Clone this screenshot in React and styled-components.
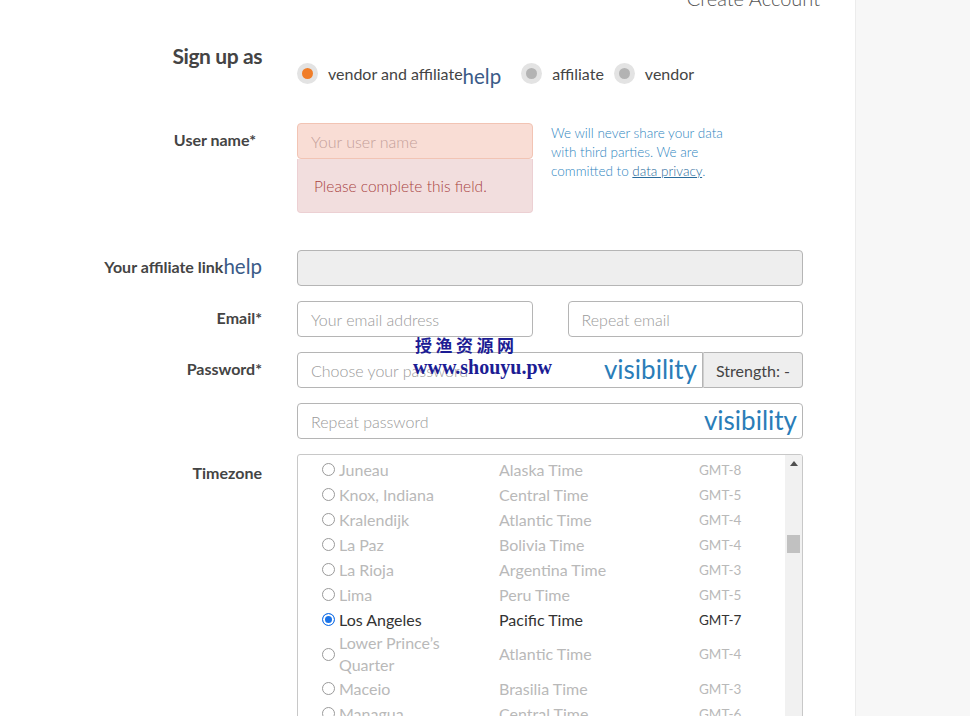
import React from "react";
import styled, { createGlobalStyle } from "styled-components";

const Global = createGlobalStyle`
  html, body { margin: 0; padding: 0; overflow: hidden; background: #fff; }
  body { font-family: Lato, "Open Sans", sans-serif; color: #444; }
  * { box-sizing: border-box; }
`;

const Page = styled.div`
  position: relative;
  display: flex;
  width: 970px;
  height: 716px;
  overflow: hidden;
`;

const Main = styled.div`
  width: 855px;
  flex: none;
  background: #fff;
`;

const Side = styled.div`
  flex: 1;
  background: #f7f7f7;
  border-left: 1px solid #ececec;
`;

const Header = styled.div`
  margin-top: -14px;
  height: 24px;
  line-height: 24px;
  font-size: 20px;
  font-weight: 300;
  color: #555;
  text-align: right;
  padding-right: 35px;
`;

const Row = styled.div`
  display: grid;
  grid-template-columns: 262px 506px;
  column-gap: 35px;
  margin-top: ${(p) => p.$mt || 0}px;
  align-items: start;
`;

const Label = styled.div`
  display: flex;
  justify-content: flex-end;
  align-items: center;
  height: ${(p) => (p.$big ? 28 : 36)}px;
  padding-bottom: ${(p) => p.$lift || 0}px;
  font-weight: 700;
  font-size: ${(p) => (p.$big ? 21 : 16)}px;
  color: #444;
  padding-right: ${(p) => p.$pr || 0}px;
  letter-spacing: ${(p) => (p.$big ? "-0.4px" : "0")};
  white-space: nowrap;
`;

const HelpIcon = styled.span`
  font-weight: 400;
  font-size: 20.5px;
  line-height: 1;
  color: #3b5b88;
  position: relative;
  top: ${(p) => p.$drop || 0}px;
`;

const RadioGroup = styled.div`
  display: flex;
  align-items: center;
  margin-top: 20px;
  height: 24px;
`;

const RoleOption = styled.label`
  display: flex;
  align-items: center;
  font-size: 16px;
  color: #444;
  margin-right: ${(p) => p.$mr || 0}px;
`;

const RoleDot = styled.span`
  width: 21px;
  height: 21px;
  border-radius: 50%;
  background: #e3e3e3;
  display: inline-flex;
  align-items: center;
  justify-content: center;
  margin-right: 10px;
  &::after {
    content: "";
    width: 11px;
    height: 11px;
    border-radius: 50%;
    background: ${(p) => (p.$on ? "#f07d28" : "#b3b3b3")};
  }
`;

const Input = styled.div`
  height: 36px;
  border: 1px solid ${(p) => (p.$error ? "#f2c4b4" : "#b5b5b5")};
  background: ${(p) => (p.$error ? "#f9ddd5" : p.$disabled ? "#eeeeee" : "#fff")};
  border-radius: ${(p) => (p.$joinRight ? "4px 0 0 4px" : "4px")};
  padding: 0 13px;
  display: flex;
  align-items: center;
  justify-content: space-between;
  font-size: 16px;
  font-weight: 300;
  color: ${(p) => (p.$error ? "#c49f9a" : "#9a9a9a")};
  flex: 1;
  min-width: 0;
`;

const Visibility = styled.span`
  font-size: 26px;
  font-weight: 400;
  color: #2a7db8;
  margin-right: -8px;
  line-height: 1;
  position: relative;
  top: -1px;
`;

const ErrorBox = styled.div`
  height: 54px;
  border: 1px solid #ecd0d3;
  border-top: none;
  background: #f2dede;
  border-radius: 0 0 4px 4px;
  color: #a94442;
  font-size: 15.5px;
  font-weight: 300;
  display: flex;
  align-items: center;
  padding-left: 16px;
`;

const UserGrid = styled.div`
  display: grid;
  grid-template-columns: 236px 190px;
  column-gap: 18px;
`;

const Privacy = styled.p`
  margin: 0;
  padding-top: 1px;
  font-size: 13.5px;
  font-weight: 300;
  line-height: 19px;
  color: #2f86c0;
  a {
    color: #2a6c9c;
    text-decoration: underline;
  }
`;

const Pair = styled.div`
  display: grid;
  grid-template-columns: 1fr 1fr;
  column-gap: 35px;
`;

const Group = styled.div`
  display: flex;
`;

const Addon = styled.div`
  width: 100px;
  height: 36px;
  background: #eeeeee;
  border: 1px solid #b5b5b5;
  border-left: 1px solid #cfcfcf;
  border-radius: 0 4px 4px 0;
  font-size: 16px;
  color: #444;
  display: flex;
  align-items: center;
  justify-content: center;
`;

const List = styled.div`
  display: flex;
  height: 290px;
  border: 1px solid #c8c8c8;
  border-radius: 3px 3px 0 0;
  overflow: hidden;
`;

const ListBody = styled.div`
  flex: 1;
  padding: 2px 0 0 24px;
`;

const TzRow = styled.div`
  display: grid;
  grid-template-columns: 177px 200px 1fr;
  align-items: center;
  min-height: 25px;
  line-height: 22px;
  font-size: 16px;
  color: ${(p) => (p.$on ? "#333" : "#b9b9b9")};
`;

const City = styled.div`
  display: flex;
  align-items: center;
  gap: 4px;
  padding-right: 30px;
`;

const Gmt = styled.div`
  font-size: 13.5px;
`;

const TzRadio = styled.span`
  flex: none;
  width: 13px;
  height: 13px;
  border-radius: 50%;
  border: 1px solid ${(p) => (p.$on ? "#1a73e8" : "#9a9a9a")};
  background: ${(p) => (p.$on ? "#1a73e8" : "#fff")};
  box-shadow: ${(p) => (p.$on ? "inset 0 0 0 2px #fff" : "none")};
`;

const Scrollbar = styled.div`
  width: 17px;
  flex: none;
  background: #f1f1f1;
`;

const ScrollArrow = styled.div`
  margin: 6px auto 0;
  width: 0;
  height: 0;
  border-left: 4px solid transparent;
  border-right: 4px solid transparent;
  border-bottom: 5px solid #505050;
`;

const Thumb = styled.div`
  margin: 69px auto 0;
  width: 13px;
  height: 18px;
  background: #c1c1c1;
`;

const Watermark = styled.div`
  position: absolute;
  left: 413px;
  top: 334px;
  color: #1c1c94;
  font-weight: 700;
  pointer-events: none;
`;

const WmCn = styled.div`
  font-family: "Noto Sans CJK SC", sans-serif;
  font-size: 17px;
  line-height: 22px;
  letter-spacing: 3.5px;
  padding-left: 2px;
`;

const WmEn = styled.div`
  font-family: "Liberation Serif", serif;
  font-size: 20px;
  line-height: 22px;
`;

const zones = [
  ["Juneau", "Alaska Time", "GMT-8"],
  ["Knox, Indiana", "Central Time", "GMT-5"],
  ["Kralendijk", "Atlantic Time", "GMT-4"],
  ["La Paz", "Bolivia Time", "GMT-4"],
  ["La Rioja", "Argentina Time", "GMT-3"],
  ["Lima", "Peru Time", "GMT-5"],
  ["Los Angeles", "Pacific Time", "GMT-7", true],
  ["Lower Prince’s Quarter", "Atlantic Time", "GMT-4"],
  ["Maceio", "Brasilia Time", "GMT-3"],
  ["Managua", "Central Time", "GMT-6"],
  ["Manaus", "Amazon Time", "GMT-4"],
];

export default function App() {
  return (
    <>
      <Global />
      <Page>
        <Main>
          <Header>Create Account</Header>
          <Row $mt={31}>
            <Label $big>Sign up as</Label>
            <RadioGroup>
              <RoleOption $mr={20}>
                <RoleDot $on />
                vendor and affiliate
                <HelpIcon $drop={3}>help</HelpIcon>
              </RoleOption>
              <RoleOption $mr={10}>
                <RoleDot />
                affiliate
              </RoleOption>
              <RoleOption>
                <RoleDot />
                vendor
              </RoleOption>
            </RadioGroup>
          </Row>
          <Row $mt={38}>
            <Label $pr={6} $lift={4}>User name*</Label>
            <UserGrid>
              <div>
                <Input $error>Your user name</Input>
                <ErrorBox>Please complete this field.</ErrorBox>
              </div>
              <Privacy>
                We will never share your data
                <br />
                with third parties. We are
                <br />
                committed to <a>data privacy</a>.
              </Privacy>
            </UserGrid>
          </Row>
          <Row $mt={37}>
            <Label $lift={4}>
              Your affiliate link<HelpIcon>help</HelpIcon>
            </Label>
            <Input $disabled />
          </Row>
          <Row $mt={15}>
            <Label $lift={4}>Email*</Label>
            <Pair>
              <Input>Your email address</Input>
              <Input>Repeat email</Input>
            </Pair>
          </Row>
          <Row $mt={15}>
            <Label $lift={4}>Password*</Label>
            <Group>
              <Input $joinRight>
                <span>Choose your password</span>
                <Visibility>visibility</Visibility>
              </Input>
              <Addon>Strength: -</Addon>
            </Group>
          </Row>
          <Row $mt={15}>
            <div />
            <Input>
              <span>Repeat password</span>
              <Visibility>visibility</Visibility>
            </Input>
          </Row>
          <Row $mt={15}>
            <Label>Timezone</Label>
            <List>
              <ListBody>
                {zones.map(([city, name, gmt, on]) => (
                  <TzRow key={city} $on={on}>
                    <City>
                      <TzRadio $on={on} />
                      <span>{city}</span>
                    </City>
                    <div>{name}</div>
                    <Gmt>{gmt}</Gmt>
                  </TzRow>
                ))}
              </ListBody>
              <Scrollbar>
                <ScrollArrow />
                <Thumb />
              </Scrollbar>
            </List>
          </Row>
        </Main>
        <Side />
        <Watermark>
          <WmCn>授渔资源网</WmCn>
          <WmEn>www.shouyu.pw</WmEn>
        </Watermark>
      </Page>
    </>
  );
}
